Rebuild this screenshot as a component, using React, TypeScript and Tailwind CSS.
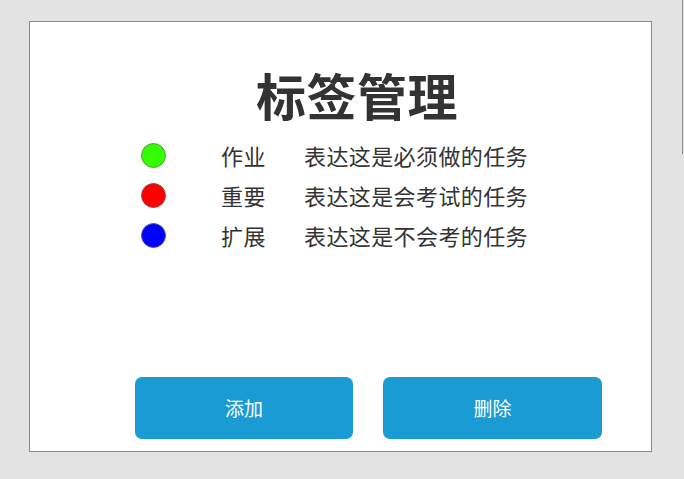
import React from "react";

const rows = [
  { color: "bg-[#33ff00]", border: "border-[#5c9c3c]", label: "作业", desc: "表达这是必须做的任务" },
  { color: "bg-[#ff0000]", border: "border-[#a04a4a]", label: "重要", desc: "表达这是会考试的任务" },
  { color: "bg-[#0000ff]", border: "border-[#5a5aa8]", label: "扩展", desc: "表达这是不会考的任务" },
];

export default function App() {
  return (
    <div
      className="flex h-[479px] w-[684px] bg-[#e3e3e3] text-[#333333]"
      style={{ fontFamily: '"Noto Sans CJK SC", "Noto Sans", sans-serif' }}
    >
      <div className="ml-[29px] mt-[21px] flex h-[431px] w-[623px] flex-col border border-[#8a8a8a] bg-white">
        <h1 className="ml-[226px] mt-[47px] text-[50px] font-bold leading-none tracking-[0.5px]">标签管理</h1>
        <div className="mt-[16px] flex flex-col">
          {rows.map((r) => (
            <div key={r.label} className="flex h-[40px] items-center">
              <div className={`ml-[111px] h-[25px] w-[25px] rounded-full border-[1.5px] ${r.border} ${r.color}`} />
              <div className="ml-[55px] w-[83px] text-[22px] leading-none tracking-[0.4px]">{r.label}</div>
              <div className="text-[22px] leading-none tracking-[0.4px]">{r.desc}</div>
            </div>
          ))}
        </div>
        <div className="mt-auto mb-[12px] ml-[105px] flex gap-[30px]">
          <button className="h-[62px] w-[218px] rounded-[7px] bg-[#1b9bd4] text-[19px] text-white">添加</button>
          <button className="h-[62px] w-[219px] rounded-[7px] bg-[#1b9bd4] text-[19px] text-white">删除</button>
        </div>
      </div>
      <div className="ml-[30px] h-[154px] w-[1px] bg-[#8a8a8a]" />
    </div>
  );
}
